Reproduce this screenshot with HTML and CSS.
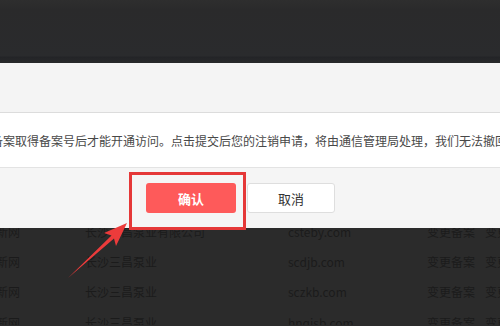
FILE: index.html
```html
<!DOCTYPE html>
<html lang="zh-CN">
<head>
  <meta charset="utf-8">
  <title>注销备案确认</title>
  <link rel="stylesheet" href="styles.css">
</head>
<body>
  <!-- Dimmed page header behind the dialog -->
  <div class="topbar"></div>

  <!-- Confirm dialog -->
  <div class="dialog">
    <div class="dialog-header"></div>
    <div class="dialog-body">
      <p class="notice">备案取得备案号后才能开通访问。点击提交后您的注销申请，将由通信管理局处理，我们无法撤回</p>
    </div>
    <div class="dialog-footer">
      <button class="btn btn-confirm">确认</button>
      <button class="btn btn-cancel">取消</button>
      <!-- Annotation box round the confirm button -->
      <div class="highlight"></div>
    </div>
  </div>

  <!-- Dimmed record table behind the dialog -->
  <div class="records">
    <div class="record-list">
      <div class="record-row"><span>新网</span><span>长沙三昌泵业有限公司</span><span>csteby.com</span><span>变更备案</span><span>变更</span></div>
      <div class="record-row"><span>新网</span><span>长沙三昌泵业</span><span>scdjb.com</span><span>变更备案</span><span>变更</span></div>
      <div class="record-row"><span>新网</span><span>长沙三昌泵业</span><span>sczkb.com</span><span>变更备案</span><span>变更</span></div>
      <div class="record-row"><span>新网</span><span>长沙三昌泵业</span><span>hnqjsb.com</span><span>变更备案</span><span>变更</span></div>
    </div>
  </div>

  <!-- Annotation arrow pointing at the confirm button -->
  <svg class="arrow" width="500" height="326" viewBox="0 0 500 326">
    <polygon points="68,278 111.5,235.5 104,233 127,223 116,246 114,238.5" fill="#ec3b3b"/>
  </svg>
</body>
</html>
```

FILE: styles.css
```css
body {
  margin: 0;
  width: 500px;
  height: 326px;
  overflow: hidden;
  position: relative;
  font-family: "Noto Sans CJK SC", "Liberation Sans", sans-serif;
  background-color: #2b2b2b;
}

.topbar {
  height: 63px;
  background: linear-gradient(#2e2e2e 0, #2a2a2b 10px, #2a2b2d 56px, #232427 57px, #27282a 62px);
}

.dialog {
  background-color: #fff;
}

.dialog-header {
  height: 49px;
  background-color: #f4f4f4;
  border-bottom: 1px solid #dcdcdc;
}

.dialog-body {
  height: 54px;
  display: flex;
  align-items: center;
  border-bottom: 1px solid #e3e3e3;
  overflow: hidden;
}

.notice {
  margin: 0 0 0 -9px;
  white-space: nowrap;
  font-size: 12px;
  color: #484848;
}

.dialog-footer {
  position: relative;
  height: 60px;
  background-color: #f5f5f5;
  display: flex;
  align-items: center;
  padding-left: 146px;
  gap: 11px;
}

.btn {
  height: 30px;
  border-radius: 3px;
  font-family: inherit;
  font-size: 13px;
  cursor: pointer;
  padding: 0;
}

.btn-confirm {
  width: 90px;
  border: none;
  background-color: #fe5a5a;
  color: #fff;
  font-weight: bold;
}

.btn-cancel {
  width: 88px;
  border: 1px solid #dedede;
  background-color: #fff;
  color: #333;
}

.highlight {
  position: absolute;
  left: 129px;
  top: 4px;
  width: 111px;
  height: 52px;
  border: 3px solid #e53838;
}

.records {
  height: 97px;
  overflow: hidden;
}

.record-list {
  margin: -12px 0 0 -4px;
}

.record-row {
  display: grid;
  grid-template-columns: 89px 203px 139px 58px auto;
  height: 30.3px;
  align-items: center;
  font-size: 12px;
  color: #1b1b1b;
  white-space: nowrap;
}

.arrow {
  position: absolute;
  left: 0;
  top: 0;
  pointer-events: none;
}
```
